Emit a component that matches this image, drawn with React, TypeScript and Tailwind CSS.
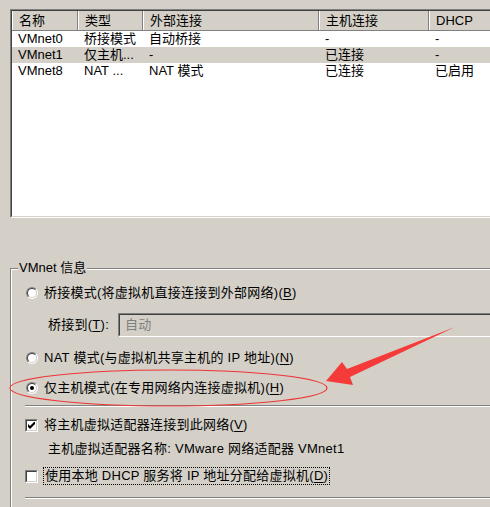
import React from "react";

const colW = ["w-[66px]", "w-[65px]", "w-[176px]", "w-[110px]", "w-[120px]"];

const headers = ["名称", "类型", "外部连接", "主机连接", "DHCP"];

const rows = [
  { cells: ["VMnet0", "桥接模式", "自动桥接", "-", "-"], selected: false },
  { cells: ["VMnet1", "仅主机...", "-", "已连接", "-"], selected: true },
  { cells: ["VMnet8", "NAT ...", "NAT 模式", "已连接", "已启用"], selected: false },
];

const Key = ({ children }: { children: React.ReactNode }) => (
  <span className="underline underline-offset-2">{children}</span>
);

const Radio = ({ checked }: { checked?: boolean }) => (
  <span className="flex w-[12px] h-[12px] shrink-0 rounded-full border border-t-[#808080] border-l-[#808080] border-b-white border-r-white">
    <span className="flex flex-1 items-center justify-center rounded-full bg-white border border-t-[#404040] border-l-[#404040] border-b-[#d4d0c8] border-r-[#d4d0c8]">
      {checked && <span className="w-[4px] h-[4px] rounded-full bg-black" />}
    </span>
  </span>
);

const Checkbox = ({ checked }: { checked?: boolean }) => (
  <span className="flex w-[13px] h-[13px] shrink-0 border border-t-[#808080] border-l-[#808080] border-b-white border-r-white">
    <span className="flex flex-1 items-center justify-center bg-white border border-t-[#404040] border-l-[#404040] border-b-[#d4d0c8] border-r-[#d4d0c8]">
      {checked && (
        <svg width="7" height="7" viewBox="0 0 7 7">
          <path d="M0 2 L2 4 L7 -1 L7 2 L2 7 L0 5 Z" fill="#000" />
        </svg>
      )}
    </span>
  </span>
);

const Etched = () => (
  <div className="h-[2px] -ml-[1px] border-t border-t-[#808080] border-b border-b-white" />
);

export default function App() {
  return (
    <div className="relative w-[490px] h-[507px] overflow-hidden bg-[#d4d0c8] text-black text-[13px] leading-[16px] font-['Liberation_Sans','Noto_Sans_CJK_SC',sans-serif]">
      <div className="w-[540px] pt-[9px] pl-[10px]">
        {/* network list */}
        <div className="h-[209px] flex border border-t-[#808080] border-l-[#808080] border-b-white border-r-white">
          <div className="flex-1 flex flex-col bg-white border border-t-[#404040] border-l-[#404040] border-b-[#d4d0c8] border-r-[#d4d0c8]">
            <div className="flex h-[20px] bg-[#d4d0c8] border-b border-b-[#808080]">
              {headers.map((h, i) => (
                <div
                  key={h}
                  className={`${colW[i]} flex items-center pl-[6px] border-l border-l-white border-r border-r-[#808080]`}
                >
                  {h}
                </div>
              ))}
            </div>
            {rows.map((r) => (
              <div
                key={r.cells[0]}
                className={`flex h-[16px] ${r.selected ? "bg-[#d4d0c8]" : ""}`}
              >
                {r.cells.map((c, i) => (
                  <div key={i} className={`${colW[i]} flex items-center pl-[6px] whitespace-nowrap`}>
                    {c}
                  </div>
                ))}
              </div>
            ))}
          </div>
        </div>

        {/* VMnet info group */}
        <div className="relative mt-[50px] border-t border-l border-[#808080]">
          <span className="absolute left-[7px] -top-[9px] px-[1px] bg-[#d4d0c8]">VMnet 信息</span>
          <div className="border-t border-l border-white pl-[14px] h-[260px] tracking-[0.25px]">
            <div className="flex items-center h-[22px] mt-[12px] gap-[6px]">
              <Radio />
              <span>
                桥接模式(将虚拟机直接连接到外部网络)(<Key>B</Key>)
              </span>
            </div>

            <div className="flex items-center h-[24px] mt-[9px] pl-[22px]">
              <span className="w-[70px]">
                桥接到(<Key>T</Key>):
              </span>
              <div className="flex-1 h-[24px] flex border border-t-[#808080] border-l-[#808080] border-b-white border-r-white">
                <div className="flex-1 flex items-center pl-[5px] text-[#808080] border border-t-[#404040] border-l-[#404040] border-b-[#d4d0c8] border-r-[#d4d0c8]">
                  自动
                </div>
              </div>
            </div>

            <div className="flex items-center h-[22px] mt-[10px] gap-[6px]">
              <Radio />
              <span>
                NAT 模式(与虚拟机共享主机的 IP 地址)(<Key>N</Key>)
              </span>
            </div>

            <div className="flex items-center h-[22px] mt-[8px] gap-[6px]">
              <Radio checked />
              <span>
                仅主机模式(在专用网络内连接虚拟机)(<Key>H</Key>)
              </span>
            </div>

            <div className="mt-[6px]">
              <Etched />
            </div>

            <div className="flex items-center h-[22px] mt-[7px] -ml-[1px] gap-[6px]">
              <Checkbox checked />
              <span>
                将主机虚拟适配器连接到此网络(<Key>V</Key>)
              </span>
            </div>

            <div className="flex items-center h-[22px] mt-[2px] pl-[22px]">
              主机虚拟适配器名称: VMware 网络适配器 VMnet1
            </div>

            <div className="flex items-center h-[22px] mt-[5px] -ml-[1px] gap-[5px]">
              <Checkbox />
              <span className="border border-dotted border-black px-[1px] leading-[16px]">
                使用本地 DHCP 服务将 IP 地址分配给虚拟机(<Key>D</Key>)
              </span>
            </div>

            <div className="mt-[10px]">
              <Etched />
            </div>
          </div>
        </div>
      </div>

      {/* annotation overlay */}
      <svg
        className="absolute inset-0 pointer-events-none"
        width="490"
        height="507"
        viewBox="0 0 490 507"
      >
        <ellipse cx="168.5" cy="388" rx="158.5" ry="18" fill="none" stroke="#ee3535" strokeWidth="1.2" />
        <polygon
          points="326,381 342,362 347,369 455,327 350,377 353,385"
          fill="#f53a3a"
        />
      </svg>
    </div>
  );
}
